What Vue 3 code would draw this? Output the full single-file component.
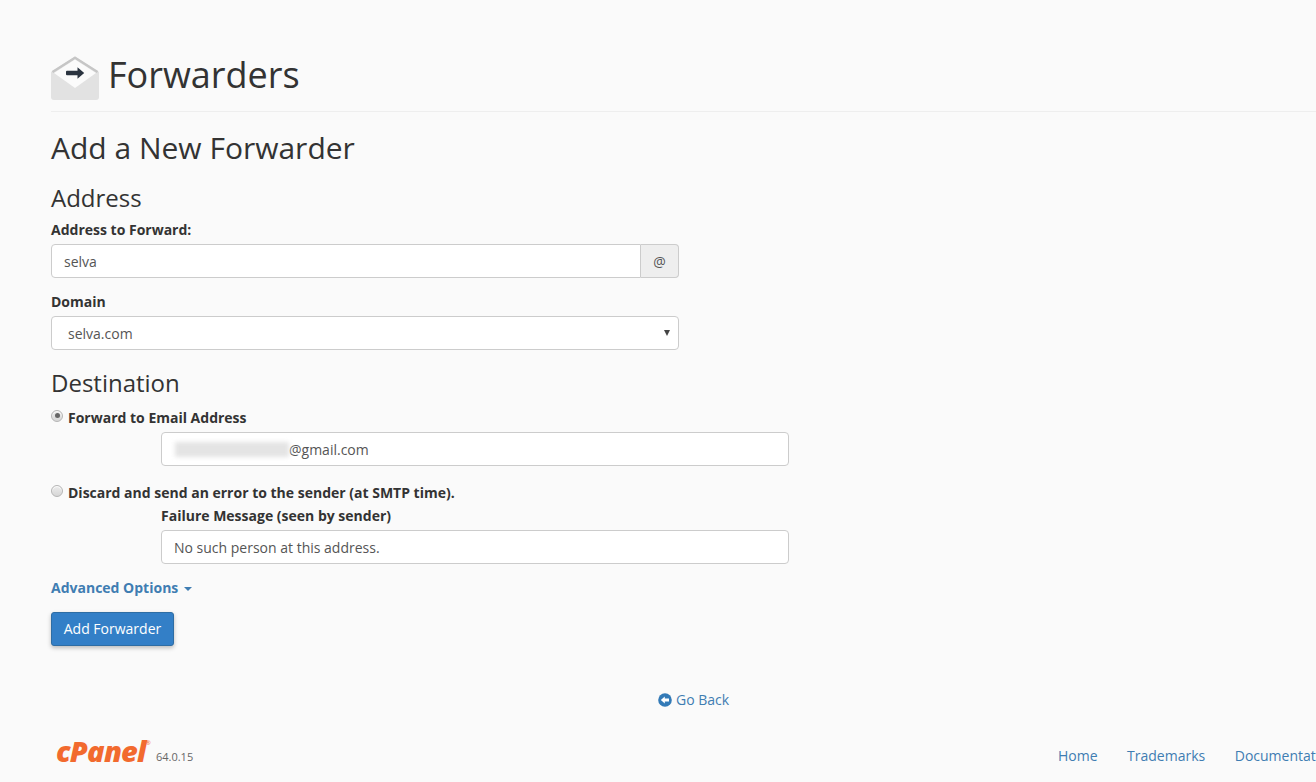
<script setup>
const footerLinks = ['Home', 'Trademarks', 'Documentation']
</script>

<template>
  <div class="page">
    <header class="page-head">
      <svg class="head-icon" width="48" height="44" viewBox="0 0 48 44">
        <path d="M0 16 L24 0.5 L48 16 V41 Q48 44 45 44 H3 Q0 44 0 41 Z" fill="#e2e2e2" />
        <path d="M1.5 16 L24 1.8 L46.5 16" fill="none" stroke="#c6c6c6" stroke-width="2.4" stroke-linejoin="round" />
        <path d="M3 17 L24 3.6 L45 17 L24 32 Z" fill="#fbfbfb" />
        <path d="M16 14.8 H26.5 V11.2 L33.2 17 L26.5 22.8 V19.2 H16 Q15 19.2 15 18.2 V15.8 Q15 14.8 16 14.8 Z" fill="#2b3440" />
      </svg>
      <h1>Forwarders</h1>
    </header>

    <h2>Add a New Forwarder</h2>

    <h3 class="first">Address</h3>
    <label class="field-label">Address to Forward:</label>
    <div class="input-group">
      <div class="input grow">selva</div>
      <span class="addon">@</span>
    </div>

    <label class="field-label domain">Domain</label>
    <div class="input select">
      <span>selva.com</span>
      <span class="caret-select"></span>
    </div>

    <h3 class="dest">Destination</h3>
    <div class="radio-row">
      <span class="radio on"></span>
      <span class="radio-label">Forward to Email Address</span>
    </div>
    <div class="input wide email">
      <span class="blurred"></span>@gmail.com
    </div>

    <div class="radio-row discard">
      <span class="radio"></span>
      <span class="radio-label">Discard and send an error to the sender (at SMTP time).</span>
    </div>
    <label class="field-label fail">Failure Message (seen by sender)</label>
    <div class="input wide">No such person at this address.</div>

    <a class="advanced">Advanced Options <span class="caret"></span></a>
    <button class="primary">Add Forwarder</button>

    <div class="go-back">
      <svg width="14" height="14" viewBox="0 0 14 14">
        <circle cx="7" cy="7" r="6.8" fill="#337ab7" />
        <path d="M2.8 7 L6.8 3.4 V5.6 H11 V8.4 H6.8 V10.6 Z" fill="#fff" />
      </svg>
      <a>Go Back</a>
    </div>

    <footer class="page-foot">
      <div class="brand">
        <span class="logo">cPanel<sup>®</sup></span>
        <span class="version">64.0.15</span>
      </div>
      <nav>
        <a v-for="link in footerLinks" :key="link">{{ link }}</a>
      </nav>
    </footer>
  </div>
</template>

<style>
html, body {
  margin: 0;
  background: #fafafa;
  overflow: hidden;
}
</style>

<style scoped>
.page {
  width: 1316px;
  height: 782px;
  overflow: hidden;
  box-sizing: border-box;
  padding-left: 51px;
  padding-top: 55px;
  background: #fafafa;
  color: #333;
  font-family: "Open Sans", "Liberation Sans", sans-serif;
  font-size: 14px;
}

.page-head {
  display: flex;
  align-items: flex-start;
  gap: 9px;
  height: 57px;
  box-sizing: border-box;
  border-bottom: 1px solid #eee;
}

.head-icon {
  flex: none;
  margin-top: 1px;
}

h1 {
  margin: 0;
  font-size: 36px;
  font-weight: 400;
  line-height: 40px;
}

h2 {
  margin: 15px 0 0;
  font-size: 30px;
  font-weight: 400;
  line-height: 42px;
}

h3 {
  margin: 0;
  font-size: 24px;
  font-weight: 400;
  line-height: 33px;
}

h3.first {
  margin-top: 12px;
}

h3.dest {
  margin-top: 16px;
}

.field-label {
  display: block;
  font-weight: 700;
  line-height: 19px;
  margin-top: 6px;
  margin-bottom: 5px;
}

.field-label.domain {
  margin-top: 14px;
  margin-bottom: 5px;
}

.field-label.fail {
  margin: 4px 0 5px 110px;
}

.input {
  box-sizing: border-box;
  height: 34px;
  padding: 0 12px;
  display: flex;
  align-items: center;
  background: #fff;
  border: 1px solid #ccc;
  border-radius: 4px;
  color: #555;
  white-space: pre;
}

.input-group {
  display: flex;
  width: 628px;
}

.input.grow {
  flex: 1;
  border-radius: 4px 0 0 4px;
}

.addon {
  width: 38px;
  box-sizing: border-box;
  height: 34px;
  display: flex;
  align-items: center;
  justify-content: center;
  background: #eee;
  border: 1px solid #ccc;
  border-left: 0;
  border-radius: 0 4px 4px 0;
  color: #555;
  font-size: 14px;
}

.select {
  width: 628px;
  justify-content: space-between;
  padding: 0 8px 0 16px;
}

.caret-select {
  width: 0;
  height: 0;
  border-left: 3px solid transparent;
  border-right: 3px solid transparent;
  border-top: 6px solid #444;
}

.radio-row {
  display: flex;
  align-items: center;
  height: 20px;
  margin-top: 8px;
}

.radio-row.discard {
  margin-top: 16px;
}

.radio {
  flex: none;
  box-sizing: border-box;
  width: 12px;
  height: 12px;
  margin: -3px 5px 0 0;
  border-radius: 50%;
  border: 1px solid #b5b5b5;
  background: linear-gradient(#ececec, #d6d6d6);
  box-shadow: inset 0 1px 1px #fff;
  position: relative;
}

.radio.on::after {
  content: "";
  position: absolute;
  left: 2.5px;
  top: 2.5px;
  width: 5px;
  height: 5px;
  border-radius: 50%;
  background: #666;
}

.radio-label {
  font-weight: 700;
}

.input.wide {
  width: 628px;
  margin-left: 110px;
}

.input.email {
  margin-top: 5px;
}

.blurred {
  display: inline-block;
  width: 114px;
  height: 15px;
  margin-left: 1px;
  background: #e4e4e4;
  filter: blur(2px);
}

.advanced {
  display: block;
  margin-top: 14px;
  line-height: 20px;
  color: #3f7db2;
  font-weight: 700;
}

.caret {
  display: inline-block;
  width: 0;
  height: 0;
  margin-left: 2px;
  vertical-align: middle;
  border-left: 4px solid transparent;
  border-right: 4px solid transparent;
  border-top: 4px solid #3f7db2;
}

.primary {
  display: block;
  margin-top: 14px;
  width: 123px;
  height: 34px;
  padding: 0 0 2px;
  background: #337fc7;
  color: #fff;
  border: 1px solid #2e6da4;
  border-radius: 3px;
  box-shadow: 0 2px 4px rgba(0, 0, 0, 0.25);
  font: 400 14px "Open Sans", "Liberation Sans", sans-serif;
}

.go-back {
  display: flex;
  align-items: center;
  gap: 4px;
  margin-top: 44px;
  margin-left: 607px;
  line-height: 20px;
  color: #3f7db2;
}

.page-foot {
  display: flex;
  justify-content: space-between;
  align-items: center;
  margin-top: 31px;
  padding-left: 5px;
  height: 28px;
}

.brand {
  display: flex;
  align-items: flex-end;
  gap: 6px;
  margin-top: -8px;
}

.logo {
  color: #f26a2e;
  font-size: 29px;
  font-weight: 800;
  font-style: italic;
  line-height: 28px;
  letter-spacing: -0.8px;
}

.logo sup {
  font-size: 6px;
  font-style: normal;
  font-weight: 400;
  vertical-align: 17px;
  line-height: 0;
}

.version {
  color: #666;
  font-size: 11px;
  line-height: 19px;
  margin-bottom: -1px;
}

nav {
  display: flex;
  gap: 29.5px;
  width: 258px;
  flex: none;
  white-space: nowrap;
}

nav a {
  color: #3f7db2;
}
</style>
